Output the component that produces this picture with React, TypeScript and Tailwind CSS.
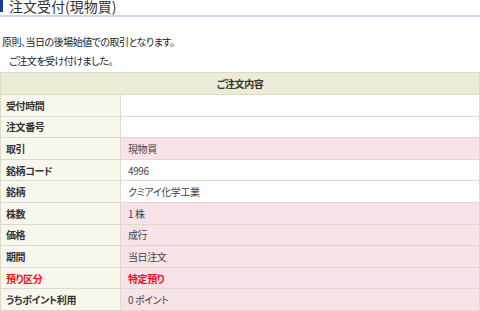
const rows: { label: string; value: string; pink?: boolean; red?: boolean }[] = [
  { label: '受付時間', value: '' },
  { label: '注文番号', value: '' },
  { label: '取引', value: '現物買', pink: true },
  { label: '銘柄コード', value: '4996' },
  { label: '銘柄', value: 'クミアイ化学工業' },
  { label: '株数', value: '1 株', pink: true },
  { label: '価格', value: '成行', pink: true },
  { label: '期間', value: '当日注文', pink: true },
  { label: '預り区分', value: '特定預り', pink: true, red: true },
  { label: 'うちポイント利用', value: '0 ポイント', pink: true },
];

export default function App() {
  return (
    <div
      className="h-[311px] w-[480px] overflow-hidden bg-white text-[#333]"
      style={{ fontFamily: '"Noto Sans CJK JP", "Noto Sans", sans-serif', fontFeatureSettings: '"palt"' }}
    >
      {/* タイトル */}
      <div className="flex h-[17px] items-start border-b-2 border-[#cdd5e8]">
        <div className="h-[12px] w-[3px] bg-[#1e3c8c]" />
        <h1 className="ml-[6px] mt-[-1px] text-[14px] leading-[15px] text-[#333]">注文受付(現物買)</h1>
      </div>

      <p className="ml-[2px] mt-[18px] text-[10px] leading-[14px] tracking-[-0.5px] text-[#222]">
        原則、当日の後場始値での取引となります。
      </p>
      <p className="ml-[9px] mt-[5px] text-[10px] leading-[14px] tracking-[-0.5px] text-[#222]">
        ご注文を受け付けました。
      </p>

      <table className="mt-[4px] w-full border-collapse text-[10px] tracking-[-0.4px]">
        <thead>
          <tr>
            <th colSpan={2} className="h-[22px] border border-[#dcdacb] bg-[#ecebd5] text-center font-bold text-[#333]">
              ご注文内容
            </th>
          </tr>
        </thead>
        <tbody>
          {rows.map((r) => (
            <tr key={r.label}>
              <td
                className={`h-[21.6px] w-[120px] border border-[#dcdacb] bg-[#f8f7ee] pl-[5px] font-bold ${
                  r.red ? 'text-[#e8141e]' : 'text-[#333]'
                }`}
              >
                {r.label}
              </td>
              <td
                className={`h-[21.6px] border border-[#dcdacb] pl-[7px] ${r.pink ? 'bg-[#f8e3e9]' : 'bg-white'} ${
                  r.red ? 'font-bold text-[#e8141e]' : 'text-[#444]'
                }`}
              >
                {r.value}
              </td>
            </tr>
          ))}
        </tbody>
      </table>
    </div>
  );
}
